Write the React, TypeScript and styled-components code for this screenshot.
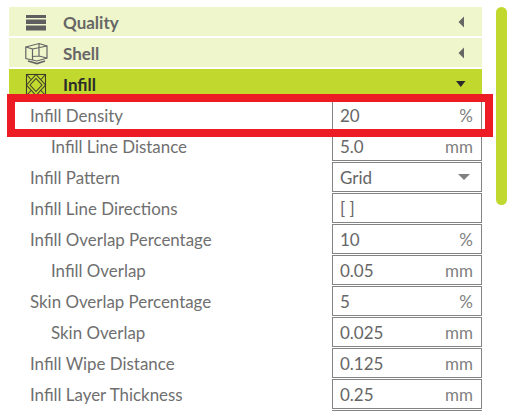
import React from "react";
import styled, { createGlobalStyle } from "styled-components";

const GlobalStyle = createGlobalStyle`
  html, body {
    margin: 0;
    height: 100%;
    background: #fff;
    overflow: hidden;
  }
`;

const Page = styled.div`
  position: relative;
  width: 508px;
  height: 411px;
  overflow: hidden;
  display: flex;
  align-items: flex-start;
  gap: 14px;
  padding: 7px 0 0 9px;
  box-sizing: border-box;
  font-family: Lato, "Open Sans", sans-serif;
  color: #6a6a6a;
`;

const Panel = styled.div`
  width: 473px;
  flex: none;
  display: flex;
  flex-direction: column;
`;

const Scrollbar = styled.div`
  width: 11px;
  height: 198px;
  flex: none;
  border-radius: 6px;
  background: #c1d82f;
`;

const Header = styled.div<{ $active?: boolean }>`
  height: 29px;
  margin-bottom: 2px;
  display: flex;
  align-items: center;
  padding: 0 16px 0 16px;
  background: ${(p) => (p.$active ? "#c1d82f" : "#f0f6cb")};
  color: ${(p) => (p.$active ? "#2b2b2b" : "#666")};
  font-size: 17px;
  font-weight: 700;
`;

const HeaderIcon = styled.svg`
  width: 24px;
  height: 24px;
  flex: none;
  margin-right: 14px;
`;

const HeaderTitle = styled.span`
  flex: 1;
  padding-top: 2px;
`;

const Rows = styled.div`
  display: flex;
  flex-direction: column;
  gap: 1px;
`;

const Row = styled.div`
  height: 30px;
  display: flex;
  align-items: center;
  justify-content: space-between;
`;

const Label = styled.span<{ $nested?: boolean }>`
  padding-left: ${(p) => (p.$nested ? "42px" : "21px")};
  font-size: 16.9px;
  color: #6f6f6f;
`;

const Field = styled.div`
  width: 150px;
  height: 30px;
  box-sizing: border-box;
  border: 1.5px solid #848484;
  display: flex;
  align-items: center;
  justify-content: space-between;
  padding: 0 8px 0 7px;
  font-size: 17px;
  color: #666;
`;

const Unit = styled.span`
  color: #808080;
`;

const Highlight = styled.div`
  position: absolute;
  left: 7px;
  top: 94px;
  width: 486px;
  height: 43px;
  box-sizing: border-box;
  border: 8px solid #ed1c24;
`;

const CaretIcon = styled.svg`
  flex: none;
`;

const SelectCaret = styled.svg`
  flex: none;
  margin: 0 3px 0 0;
`;

const LeftCaret = () => (
  <CaretIcon width="10" height="14" viewBox="0 0 10 14">
    <path d="M8 1.5 L2.5 7 L8 12.5 Z" fill="#666" />
  </CaretIcon>
);

const DownCaret = () => (
  <CaretIcon width="12" height="10" viewBox="0 0 12 10">
    <path d="M2 2 L11.5 2 L6.75 8 Z" fill="#2b2b2b" />
  </CaretIcon>
);

const QualityIcon = () => (
  <HeaderIcon viewBox="0 0 24 24">
    <rect x="1" y="5" width="20" height="3" fill="#5f5f5f" />
    <rect x="1" y="9.5" width="20" height="4.5" fill="#5f5f5f" />
    <rect x="1" y="15.5" width="20" height="5" fill="#5f5f5f" />
  </HeaderIcon>
);

const ShellIcon = () => (
  <HeaderIcon viewBox="0 0 24 24" fill="none" stroke="#666" strokeWidth="1.2">
    <path d="M0.8 6 L14 2.5 L22 5 V17 L12 20 L0.8 17.5 Z" />
    <path d="M0.8 6 L7.5 8 V19 M7.5 8 L22 5 M14 2.5 V15 M7.5 15.5 L14 15 L22 17" />
    <path d="M3 20 L12 22.5 L20 20" strokeWidth="1.8" />
  </HeaderIcon>
);

const InfillIcon = () => (
  <HeaderIcon viewBox="0 0 24 24" fill="none" stroke="#3d3d2a" strokeWidth="1.1">
    <rect x="1.5" y="2.5" width="19" height="21" />
    <path d="M1.5 13 L11 2.5 L20.5 13 L11 23.5 Z" />
    <path d="M5 13 L11 6.5 L17 13 L11 19.5 Z" />
    <path d="M1.5 2.5 L6 7.5 M20.5 2.5 L16 7.5 M1.5 23.5 L6 18.5 M20.5 23.5 L16 18.5" />
  </HeaderIcon>
);

type Setting = { label: string; value: string; unit?: string; nested?: boolean; select?: boolean };

const settings: Setting[] = [
  { label: "Infill Density", value: "20", unit: "%" },
  { label: "Infill Line Distance", value: "5.0", unit: "mm", nested: true },
  { label: "Infill Pattern", value: "Grid", select: true },
  { label: "Infill Line Directions", value: "[ ]" },
  { label: "Infill Overlap Percentage", value: "10", unit: "%" },
  { label: "Infill Overlap", value: "0.05", unit: "mm", nested: true },
  { label: "Skin Overlap Percentage", value: "5", unit: "%" },
  { label: "Skin Overlap", value: "0.025", unit: "mm", nested: true },
  { label: "Infill Wipe Distance", value: "0.125", unit: "mm" },
  { label: "Infill Layer Thickness", value: "0.25", unit: "mm" },
  { label: "", value: "" },
];

export default function App() {
  return (
    <Page>
      <GlobalStyle />
      <Panel>
        <Header>
          <QualityIcon />
          <HeaderTitle>Quality</HeaderTitle>
          <LeftCaret />
        </Header>
        <Header>
          <ShellIcon />
          <HeaderTitle>Shell</HeaderTitle>
          <LeftCaret />
        </Header>
        <Header $active>
          <InfillIcon />
          <HeaderTitle>Infill</HeaderTitle>
          <DownCaret />
        </Header>
        <Rows>
          {settings.map((s, i) => (
            <Row key={i}>
              <Label $nested={s.nested}>{s.label}</Label>
              <Field>
                <span>{s.value}</span>
                {s.unit && <Unit>{s.unit}</Unit>}
                {s.select && (
                  <SelectCaret width="12" height="8" viewBox="0 0 12 8">
                    <path d="M0 1 L12 1 L6 7 Z" fill="#808080" />
                  </SelectCaret>
                )}
              </Field>
            </Row>
          ))}
        </Rows>
      </Panel>
      <Scrollbar />
      <Highlight />
    </Page>
  );
}
